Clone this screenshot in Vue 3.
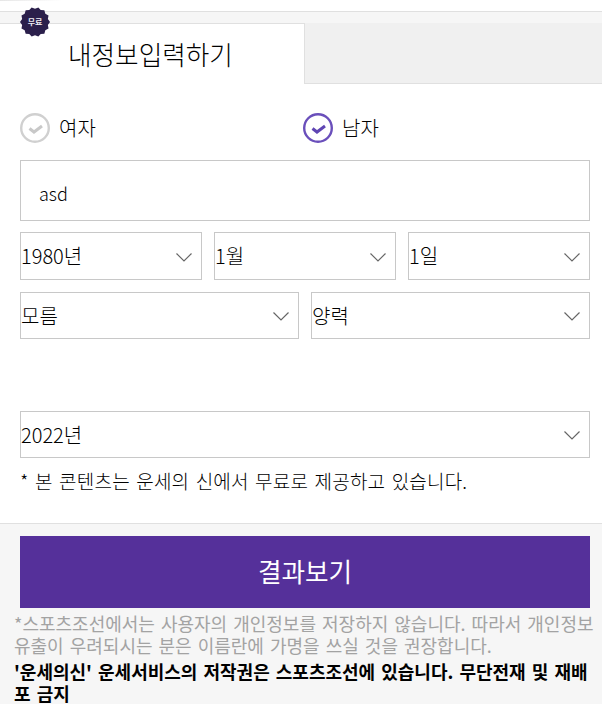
<template>
  <div class="page">
    <div class="topline"></div>
    <div class="band"></div>
    <div class="tabs">
      <div class="tab active">내정보입력하기</div>
      <div class="tab idle"></div>
      <svg class="badge" viewBox="0 0 30 30" width="30" height="30" aria-hidden="true">
        <path :d="badgePath" fill="#2b1f4b" />
        <text x="15" y="18" text-anchor="middle" class="badge-text">무료</text>
      </svg>
    </div>
    <section class="form">
      <div class="genders">
        <div class="gender">
          <svg viewBox="0 0 30 30" width="30" height="30" aria-hidden="true">
            <circle cx="15" cy="15" r="13.8" fill="none" stroke="#d0d0d0" stroke-width="2.4" />
            <path d="M9.5 15.5l4.5 3.5 8-6" fill="none" stroke="#c8c8c8" stroke-width="3" />
          </svg>
          <span>여자</span>
        </div>
        <div class="gender">
          <svg viewBox="0 0 30 30" width="30" height="30" aria-hidden="true">
            <circle cx="15" cy="15" r="13.8" fill="none" stroke="#6a4fbb" stroke-width="2.4" />
            <path d="M9.5 15.5l4.5 3.5 8-6" fill="none" stroke="#5f45b3" stroke-width="3" />
          </svg>
          <span>남자</span>
        </div>
      </div>
      <div class="name">asd</div>
      <div class="row three">
        <div v-for="v in dates" :key="v" class="select">
          <span>{{ v }}</span>
          <svg class="chev" viewBox="0 0 16 9" width="16" height="9" aria-hidden="true"><path d="M.5.5L8 8 15.5.5" /></svg>
        </div>
      </div>
      <div class="row two">
        <div v-for="v in kinds" :key="v" class="select">
          <span>{{ v }}</span>
          <svg class="chev" viewBox="0 0 16 9" width="16" height="9" aria-hidden="true"><path d="M.5.5L8 8 15.5.5" /></svg>
        </div>
      </div>
      <div class="select year">
        <span>2022년</span>
        <svg class="chev" viewBox="0 0 16 9" width="16" height="9" aria-hidden="true"><path d="M.5.5L8 8 15.5.5" /></svg>
      </div>
      <p class="note">* 본 콘텐츠는 운세의 신에서 무료로 제공하고 있습니다.</p>
    </section>
    <section class="footer">
      <div class="submit">결과보기</div>
      <p class="privacy">*스포츠조선에서는 사용자의 개인정보를 저장하지 않습니다. 따라서 개인정보 유출이 우려되시는 분은 이름란에 가명을 쓰실 것을 권장합니다.</p>
      <p class="copy">'운세의신' 운세서비스의 저작권은 스포츠조선에 있습니다. 무단전재 및 재배포 금지</p>
    </section>
  </div>
</template>

<script setup>
const dates = ['1980년', '1월', '1일']
const kinds = ['모름', '양력']

const points = []
for (let i = 0; i < 28; i++) {
  const r = i % 2 === 0 ? 15 : 13.2
  const a = (Math.PI * 2 * i) / 28
  points.push(`${(15 + r * Math.cos(a)).toFixed(2)} ${(15 + r * Math.sin(a)).toFixed(2)}`)
}
const badgePath = 'M' + points.join('L') + 'Z'
</script>

<style>
html, body { margin: 0; background: #fff; }
</style>

<style scoped>
.page {
  width: 602px;
  height: 704px;
  overflow: hidden;
  background: #fff;
  color: #000;
  font-family: "Noto Sans CJK KR", "Noto Sans", sans-serif;
}
.topline {
  height: 11px;
  background: linear-gradient(90deg, #e6e6e6, #fff) no-repeat 0 0 / 62px 1px;
}
.band {
  height: 11px;
  background: #f6f6f6;
  border-top: 1px solid #e0e0e0;
}
.tabs {
  position: relative;
  display: flex;
  height: 61px;
}
.tab { box-sizing: border-box; }
.active {
  width: 304px;
  height: 61px;
  background: #fff;
  border-top: 1px solid #e0e0e0;
  padding: 12px 0 0 68px;
  font-size: 25.6px;
  line-height: 36px;
  font-weight: 300;
}
.idle {
  flex: 1;
  height: 61px;
  background: #f0f0f0;
  border-left: 1px solid #e0e0e0;
  border-bottom: 1px solid #e0e0e0;
}
.badge {
  position: absolute;
  left: 20px;
  top: -16px;
}
.badge-text {
  font-size: 8px;
  font-weight: 700;
  fill: #f0eef4;
}
.form { padding: 29px 12px 0 20px; }
.genders { display: flex; height: 30px; }
.gender {
  width: 283px;
  display: flex;
  align-items: center;
  gap: 9px;
  font-size: 20px;
  font-weight: 300;
}
.gender svg { flex: none; }
.gender span { margin-top: -2px; }
.name {
  box-sizing: border-box;
  height: 61px;
  margin-top: 17px;
  padding-left: 18px;
  border: 1px solid #c8c8c8;
  font-size: 18px;
  line-height: 65px;
  font-weight: 300;
}
.row { display: grid; gap: 12px; margin-top: 12px; }
.three { grid-template-columns: 182px 182px 182px; margin-top: 11px; }
.two { grid-template-columns: 279px 279px; }
.select {
  box-sizing: border-box;
  height: 48px;
  padding: 0 9px 0 0;
  display: flex;
  align-items: center;
  justify-content: space-between;
  border: 1px solid #c8c8c8;
  font-size: 20px;
  font-weight: 300;
}
.select span { margin-top: -1px; }
.two .select { height: 47px; }
.two .select span { margin-top: -1px; }
.year {
  height: 47px;
  margin-top: 72px;
}
.chev { margin-top: 2px; }
.chev path {
  fill: none;
  stroke: #666;
  stroke-width: 1.2;
}
.note {
  margin: 9px 0 0;
  font-size: 19px;
  line-height: 27px;
  font-weight: 300;
  word-spacing: 2px;
  letter-spacing: 0.2px;
  white-space: nowrap;
}
.footer {
  margin-top: 29px;
  height: 181px;
  box-sizing: border-box;
  padding: 12px 0 0 14px;
  background: #f6f6f6;
  border-top: 1px solid #e0e0e0;
}
.submit {
  box-sizing: border-box;
  width: 570px;
  height: 72px;
  margin-left: 6px;
  background: #55309a;
  color: #fff;
  text-align: center;
  font-size: 25.6px;
  line-height: 70px;
  font-weight: 400;
}
.privacy {
  margin: 4px 0 0;
  width: 582px;
  color: #a3a3a3;
  font-size: 18px;
  line-height: 22px;
  font-weight: 400;
  word-spacing: 2px;
}
.copy {
  margin: 4px 0 0;
  width: 582px;
  font-size: 18px;
  line-height: 22px;
  font-weight: 700;
  word-spacing: 2px;
}
</style>
